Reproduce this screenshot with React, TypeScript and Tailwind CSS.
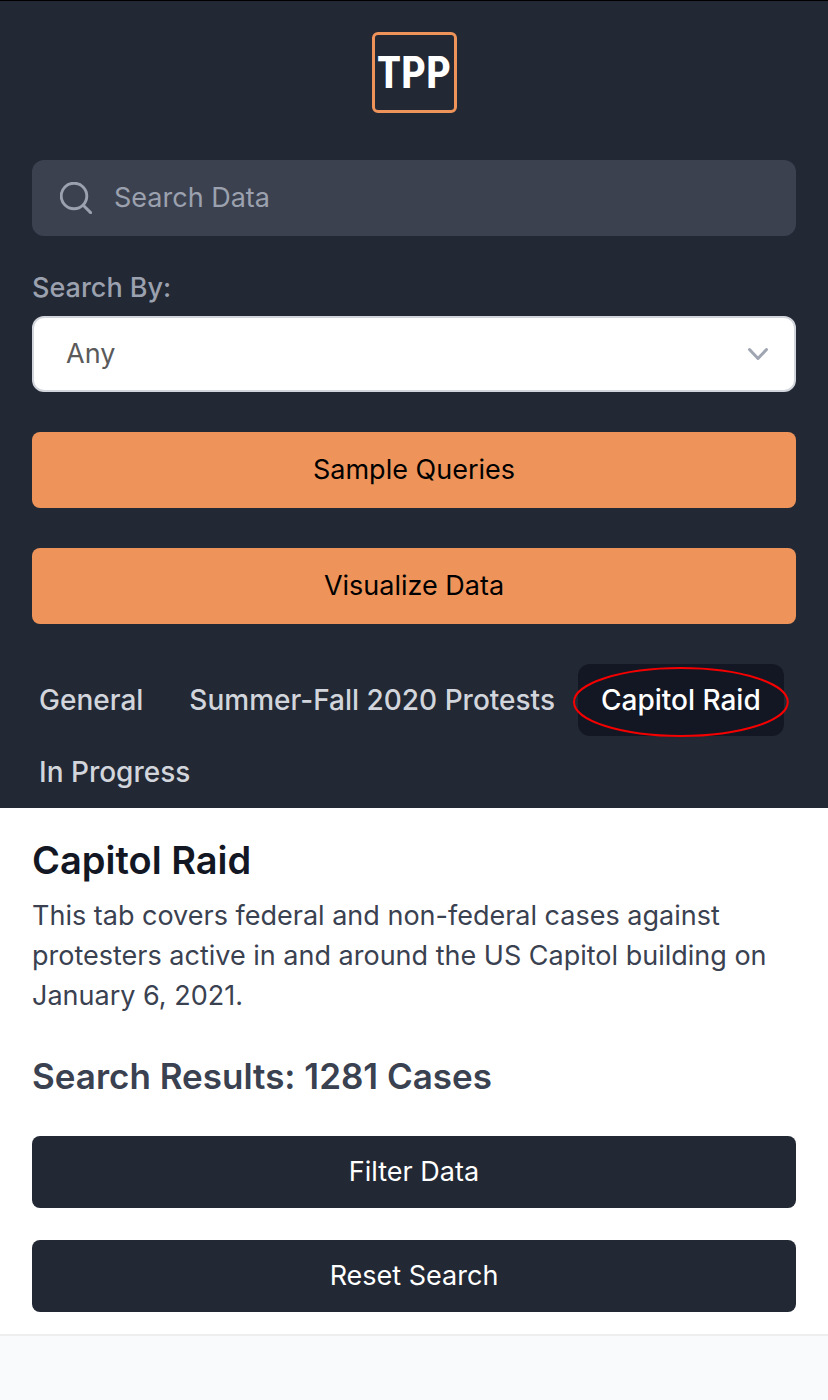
import { useState } from "react";

const tabs = ["General", "Summer-Fall 2020 Protests", "Capitol Raid", "In Progress"];

function Logo() {
  return (
    <a
      href="#"
      aria-label="TPP home"
      className="flex h-[81px] w-[85px] items-center justify-center rounded-md border-[3px] border-[#ee945a] font-['Roboto_Condensed','Open_Sans_Condensed','Noto_Sans_Condensed',Lato,sans-serif] text-[44px] leading-none font-bold text-white"
    >
      TPP
    </a>
  );
}

function SearchIcon() {
  return (
    <svg viewBox="0 0 32 32" className="h-8 w-8 shrink-0" fill="none" stroke="currentColor" strokeWidth="2.9" strokeLinecap="round" aria-hidden="true">
      <circle cx="14" cy="14" r="12.8" />
      <path d="M23.5 23.5 30.6 30.6" />
    </svg>
  );
}

export default function App() {
  const [active, setActive] = useState("Capitol Raid");

  return (
    <div className="min-h-screen bg-[#f9fafc] font-[Inter,sans-serif] text-[27px] leading-10">
      <header className="border-t border-black bg-[#222834] px-8 pb-0 pt-[31px]">
        <div className="flex justify-center">
          <Logo />
        </div>

        <label className="mt-[47px] flex h-[76px] items-center gap-[22px] rounded-xl bg-[#3c4150] px-7 text-[#9ba1ae]">
          <SearchIcon />
          <input
            type="search"
            aria-label="Search Data"
            placeholder="Search Data"
            className="min-w-0 flex-1 bg-transparent outline-none placeholder:text-[#9ba1ae]"
          />
        </label>

        <label htmlFor="search-by" className="mt-8 block font-medium text-[#9ba1ae]">
          Search By:
        </label>
        <div className="mt-2 grid items-center">
          <select
            id="search-by"
            className="col-start-1 row-start-1 h-[76px] w-full appearance-none rounded-xl border-2 border-[#d2d6dc] bg-white px-8 text-[#5a5a5a]"
          >
            <option>Any</option>
            <option>Name</option>
          </select>
          <svg viewBox="0 0 24 14" className="pointer-events-none col-start-1 row-start-1 mr-[26px] h-[14px] w-6 justify-self-end text-[#9fa6b2]" fill="none" stroke="currentColor" strokeWidth="3" strokeLinecap="round" strokeLinejoin="round" aria-hidden="true">
            <path d="M3.5 2.5 12 11.5 20.5 2.5" />
          </svg>
        </div>

        <div className="mt-10 flex flex-col gap-10">
          <button type="button" className="h-[76px] rounded-lg bg-[#ee945a] text-black">
            Sample Queries
          </button>
          <button type="button" className="h-[76px] rounded-lg bg-[#ee945a] text-black">
            Visualize Data
          </button>
        </div>

        <nav className="-mx-4 mt-10 flex flex-wrap text-[28px] font-medium">
          {tabs.map((tab) => (
            <button
              key={tab}
              type="button"
              aria-current={tab === active ? "page" : undefined}
              onClick={() => setActive(tab)}
              className={
                tab === active
                  ? "relative h-[72px] rounded-xl bg-[#121723] px-[23px] text-white"
                  : "h-[72px] rounded-xl px-[23px] text-[#d2d6dc]"
              }
            >
              {tab}
              {tab === active && (
                <svg viewBox="0 0 216 70" preserveAspectRatio="none" className="pointer-events-none absolute -inset-x-[5px] top-[3px] h-[70px] w-[calc(100%+10px)]" fill="none" stroke="#f40000" strokeWidth="2" aria-hidden="true">
                  <ellipse cx="108" cy="35" rx="107" ry="34" />
                </svg>
              )}
            </button>
          ))}
        </nav>
      </header>

      <main className="border-b-2 border-[#eeeeef] bg-white px-8 pb-[22px] pt-7">
        <h1 className="text-[38px] leading-[48px] font-semibold text-[#121723]">Capitol Raid</h1>
        <p className="mt-3 text-[#3a4150]">
          This tab covers federal and non-federal cases against protesters active in and around the US Capitol building on
          January 6, 2021.
        </p>
        <h2 className="mt-8 text-[35px] leading-[56px] font-semibold text-[#3a4150]">Search Results: 1281 Cases</h2>
        <div className="mt-8 flex flex-col gap-8">
          <button type="button" className="h-[72px] rounded-lg bg-[#222834] text-white">
            Filter Data
          </button>
          <button type="button" className="h-[72px] rounded-lg bg-[#222834] text-white">
            Reset Search
          </button>
        </div>
      </main>
    </div>
  );
}
